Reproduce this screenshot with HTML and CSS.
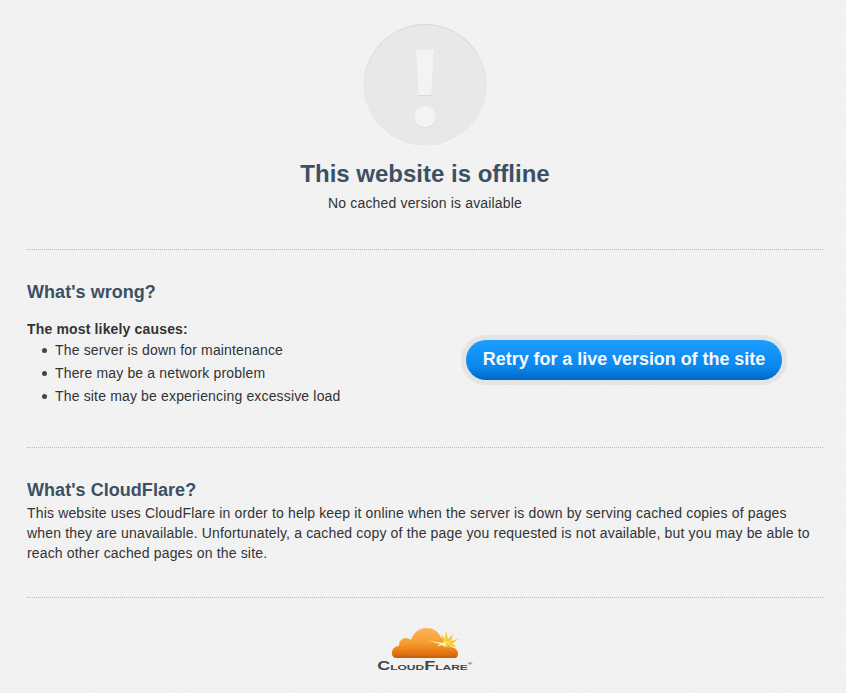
FILE: index.html
```html
<!DOCTYPE html>
<html lang="en">
<head>
    <meta charset="UTF-8">
    <meta name="viewport" content="width=device-width, initial-scale=1.0">
    <title>This website is offline</title>
    <link rel="stylesheet" href="styles.css">
</head>
<body>
    <div class="page">
        <div class="header">
            <svg class="alert-icon" width="124" height="124" viewBox="0 0 124 124">
                <defs>
                    <linearGradient id="discEdge" x1="0" y1="0" x2="0" y2="1">
                        <stop offset="0" stop-color="#d6d6d6"/>
                        <stop offset="0.5" stop-color="#e4e4e4"/>
                        <stop offset="1" stop-color="#fafafa"/>
                    </linearGradient>
                </defs>
                <circle cx="62" cy="61.5" r="61.5" fill="url(#discEdge)"/>
                <circle cx="62" cy="61.5" r="60.5" fill="#e8e8e8"/>
                <path d="M53 27h18l-2.500 45h-13z" fill="#d8d8d8"/>
                <path d="M53 26h18l-2.500 45h-13z" fill="#f3f3f3"/>
                <circle cx="62" cy="93.500" r="10.700" fill="#d6d6d6"/>
                <circle cx="62" cy="92.700" r="10.700" fill="#f3f3f3"/>
            </svg>
            <h1>This website is offline</h1>
            <p class="subtitle">No cached version is available</p>
        </div>

        <div class="section wrong">
            <div class="wrong-text">
                <h2>What's wrong?</h2>
                <p class="causes-title">The most likely causes:</p>
                <ul class="causes">
                    <li>The server is down for maintenance</li>
                    <li>There may be a network problem</li>
                    <li>The site may be experiencing excessive load</li>
                </ul>
            </div>
            <div class="retry">
                <a class="retry-button" href="#">Retry for a live version of the site</a>
            </div>
        </div>

        <div class="section about">
            <h2>What's CloudFlare?</h2>
            <p>This website uses CloudFlare in order to help keep it online when the server is down by serving cached copies of pages when they are unavailable. Unfortunately, a cached copy of the page you requested is not available, but you may be able to reach other cached pages on the site.</p>
        </div>

        <div class="section footer">
            <svg class="cloud" width="66" height="30" viewBox="0 0 66 30">
                <defs>
                    <linearGradient id="cloudFill" x1="0" y1="0" x2="0" y2="1">
                        <stop offset="0" stop-color="#fbb45c"/>
                        <stop offset="0.45" stop-color="#f6a035"/>
                        <stop offset="0.72" stop-color="#ee8318"/>
                        <stop offset="1" stop-color="#c9600f"/>
                    </linearGradient>
                    <linearGradient id="cloudBand" x1="0" y1="0" x2="0" y2="1">
                        <stop offset="0" stop-color="#e8780f"/>
                        <stop offset="1" stop-color="#c25a0c"/>
                    </linearGradient>
                </defs>
                <path d="M51 13l-2-7 4 5 1-8 2 8 5-5-2 7 7-2-6 5 5 3-9-1z" fill="#f8c52c"/>
                <path d="M5 30C1 30 0 27 0 25c0-4 3-7 7-7 0-5 3-8 7-8 2 0 4 1 5 2C21 5 27 0 34 0c7 0 12 3 14 8l10 11c5 0 8 3 8 7 0 3-2 4-4 4z" fill="url(#cloudFill)"/>
                <path d="M5 30C2 30 .5 28.500 .5 26.500 14 25 50 24.500 65.500 26.500 65 29 64 30 62 30z" fill="url(#cloudBand)"/>
                <path d="M51 13.500l3-7 1 7 6-3-5 4.500 8 1.500-9 .5 2 3-5-3z" fill="#fbd84a"/>
                <path d="M36 12.500l15 2.500 3-1-1 2.500 1 3-4-2.500-5 1.500 3-2.500z" fill="#fff6c4"/>
            </svg>
            <div class="wordmark">CloudFlare<sup>®</sup></div>
        </div>
    </div>
</body>
</html>
```

FILE: styles.css
```css
body {
    margin: 0;
    background-color: #f4f4f4;
    background-image: url("data:image/svg+xml,%3Csvg xmlns='http://www.w3.org/2000/svg' width='200' height='200'%3E%3Cfilter id='n'%3E%3CfeTurbulence type='fractalNoise' baseFrequency='0.7' numOctaves='2'/%3E%3CfeColorMatrix values='0 0 0 0 0.5 0 0 0 0 0.5 0 0 0 0 0.5 0.12 0 0 0 -0.02'/%3E%3C/filter%3E%3Crect width='200' height='200' filter='url(%23n)'/%3E%3C/svg%3E");
    color: #333;
    font-family: "Liberation Sans", Arial, sans-serif;
    font-size: 14px;
    line-height: 20px;
    letter-spacing: 0.16px;
}

.page {
    width: 796px;
    height: 693px;
    margin-left: 27px;
    overflow: hidden;
}

h1, h2, p, ul {
    margin: 0;
}

.header {
    height: 249px;
    text-align: center;
    display: flex;
    flex-direction: column;
    align-items: center;
}

.alert-icon {
    margin-top: 24px;
    display: block;
}

h1 {
    margin-top: 11px;
    font-size: 24px;
    line-height: 30px;
    letter-spacing: 0;
    color: #3c5064;
}

.subtitle {
    margin-top: 4px;
}

.section {
    border-top: 1px dotted #bbb;
}

h2 {
    font-size: 18px;
    line-height: 22px;
    letter-spacing: 0.05px;
    color: #3c5064;
}

.wrong {
    height: 197px;
    display: flex;
}

.wrong-text {
    width: 398px;
    padding-top: 31px;
}

.causes-title {
    margin-top: 16px;
    font-weight: bold;
}

.causes {
    padding-left: 28px;
    list-style: none;
}

.causes li {
    line-height: 23px;
    display: flex;
    align-items: center;
}

.causes li::before {
    content: "";
    width: 5px;
    height: 5px;
    border-radius: 50%;
    background-color: #444;
    margin-left: -13px;
    margin-right: 8px;
    flex: none;
}

.retry {
    flex: 1;
    display: flex;
    align-items: center;
    justify-content: center;
    padding-top: 22px;
}

.retry-button {
    display: block;
    padding: 0 17px;
    height: 40px;
    line-height: 38px;
    border-radius: 20px;
    background: linear-gradient(#1c9dff, #0a85ec 70%, #0067c0);
    box-shadow: 0 0 0 5px #e4e4e4;
    color: #f4f8fc;
    font-size: 18px;
    font-weight: bold;
    letter-spacing: -0.05px;
    text-decoration: none;
    white-space: nowrap;
}

.about {
    height: 150px;
    padding-top: 31px;
    box-sizing: border-box;
}

.about p {
    margin-top: 2px;
}

.footer {
    display: flex;
    flex-direction: column;
    align-items: center;
    padding-top: 30px;
}

.cloud {
    display: block;
}

.wordmark {
    margin-top: 1px;
    font-size: 12px;
    line-height: 14px;
    font-weight: bold;
    font-variant: small-caps;
    letter-spacing: 0;
    color: #444;
    transform: scaleX(1.5);
}

.wordmark sup {
    font-size: 4px;
    line-height: 0;
}
```
